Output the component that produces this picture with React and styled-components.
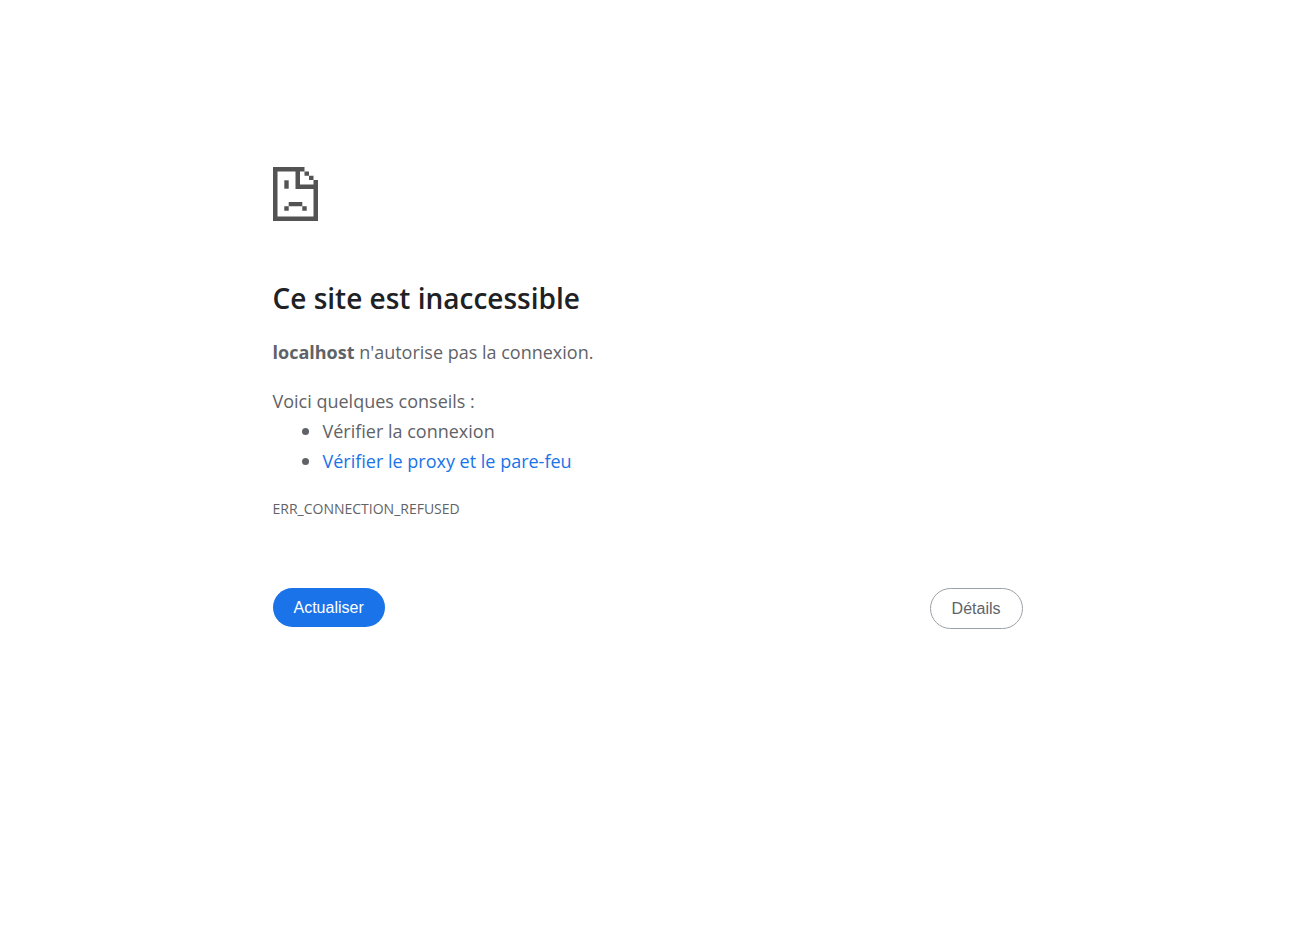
import React from "react";
import styled, { createGlobalStyle } from "styled-components";

const GlobalStyle = createGlobalStyle`
  body {
    margin: 0;
    background: #fff;
    color: #5f6368;
    font-family: "Segoe UI", "Open Sans", "Noto Sans", sans-serif;
    font-size: 18px;
    line-height: 30px;
  }
`;

const Page = styled.main`
  box-sizing: border-box;
  max-width: 750px;
  margin: 0 auto;
  padding-top: 167px;
`;

const SadPage = styled.svg`
  display: block;
  width: 45px;
  height: 54px;
  margin-bottom: 58px;
  fill: #535353;
`;

const Title = styled.h1`
  margin: 0 0 20px;
  color: #202124;
  font-size: 28px;
  font-weight: 600;
  line-height: 38px;
`;

const Summary = styled.p`
  margin: 0 0 19px;
`;

const Intro = styled.p`
  margin: 0;
`;

const Tips = styled.ul`
  margin: 0 0 18px;
  padding-left: 50px;
`;

const Tip = styled.li`
  line-height: 29px;

  &::marker {
    font-size: 21px;
  }
`;

const TipLink = styled.a`
  color: #1a73e8;
  text-decoration: none;
`;

const ErrorCode = styled.div`
  font-size: 14px;
`;

const Actions = styled.div`
  display: flex;
  align-items: flex-start;
  justify-content: space-between;
  margin-top: 64px;
`;

const Button = styled.button`
  padding: 10px 21px;
  border: ${(p) => (p.$outlined ? "1px solid #9aa0a6" : "0")};
  border-radius: 24px;
  background: ${(p) => (p.$outlined ? "#fff" : "#1a73e8")};
  color: ${(p) => (p.$outlined ? "#5f6368" : "#fff")};
  font: 16px/19px Arial, "Liberation Sans", sans-serif;
  cursor: pointer;
`;

export default function App() {
  return (
    <>
      <GlobalStyle />
      <Page>
        <SadPage viewBox="0 0 45 54" aria-hidden="true">
          <path d="M0 0H31.5V4.5H27V17.5H40.5V13H45V54H0ZM4.5 4.5V49.5H40.5V22H22.5V4.5Z" fillRule="evenodd" />
          <path d="M31.5 4.5H36V8.8H31.5ZM36 8.8H40.5V13H36Z" />
          <path d="M11.3 13.3H15.7V21.7H11.3Z" />
          <path d="M15.7 35H29.3V39.3H15.7ZM11.3 39.3H15.7V43.7H11.3ZM29.3 39.3H33.7V43.7H29.3Z" />
        </SadPage>
        <Title>Ce site est inaccessible</Title>
        <Summary>
          <strong>localhost</strong> n'autorise pas la connexion.
        </Summary>
        <Intro>Voici quelques conseils :</Intro>
        <Tips>
          <Tip>Vérifier la connexion</Tip>
          <Tip>
            <TipLink href="#proxy">Vérifier le proxy et le pare-feu</TipLink>
          </Tip>
        </Tips>
        <ErrorCode>ERR_CONNECTION_REFUSED</ErrorCode>
        <Actions>
          <Button type="button">Actualiser</Button>
          <Button type="button" $outlined>
            Détails
          </Button>
        </Actions>
      </Page>
    </>
  );
}
